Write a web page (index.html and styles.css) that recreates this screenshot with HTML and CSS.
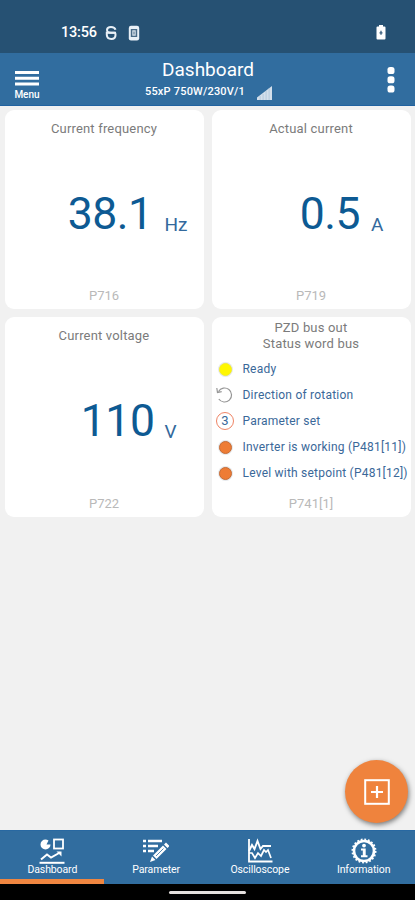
FILE: index.html
```html
<!DOCTYPE html>
<html lang="en">
<head>
<meta charset="utf-8">
<title>Dashboard</title>
<link rel="stylesheet" href="styles.css">
</head>
<body>
<div class="status">
  <span class="clock">13:56</span>
  <svg class="st-g" width="12" height="16" viewBox="0 0 12 16" fill="none" stroke="#e8f0f7" stroke-width="2"><path d="M10.500 4.800C9.500 1 2.300 1 2 4.800c0 2.600 1.300 2.900 4 2.900h5"/><path d="M1.800 7.700h7.700c1 0 1 1.300 1 2.300 0 5.300-8.300 5.300-8.700 0z"/></svg>
  <svg class="st-p" width="12" height="16" viewBox="0 0 12 16"><rect x=".8" y=".8" width="10.400" height="14.600" rx="2.200" fill="#e8f0f7"/><rect x="2.800" y="4" width="6.400" height="8" fill="#486b88"/><rect x="4.300" y="5.300" width="3.400" height="5.400" fill="#dce6ee"/><path d="M6 6.500v3" stroke="#486b88"/></svg>
  <svg class="battery" width="10" height="15" viewBox="0 0 10 15"><path d="M3 0h4v1.500h1.500Q9.500 1.500 9.500 2.500V13.500Q9.500 14.500 8.500 14.500h-7Q.5 14.500.5 13.500V2.500Q.5 1.500 1.500 1.500H3z" fill="#fff"/><path d="M5 5.800v4M3.500 7.800h3" stroke="#3a5f7e" stroke-width="1.300"/></svg>
</div>
<header class="header">
  <div class="menu"><svg width="24" height="15" viewBox="0 0 24 15" fill="#fff"><path d="M0 0h24v3H0zM0 5.700h24v3H0zM0 11.400h24v3H0z"/></svg><span>Menu</span></div>
  <div class="heading">
    <h1>Dashboard</h1>
    <div class="device"><span>55xP 750W/230V/1</span><svg width="15" height="14" viewBox="0 0 15 14"><path d="M0 14v-2.500L15 0v14z" fill="#d3dfeb"/><path d="M3.100 14v-4M6.100 14V8M9.100 14V5M12.100 14V2" stroke="#9fbad2" stroke-width=".6"/></svg></div>
  </div>
  <svg class="more" width="8" height="28" viewBox="0 0 8 28" fill="#fff"><rect x=".5" y="1" width="7" height="7" rx="2.600"/><rect x=".5" y="10.300" width="7" height="7" rx="2.600"/><rect x=".5" y="19.600" width="7" height="7" rx="2.600"/></svg>
</header>
<main class="main">
  <section class="card"><h2>Current frequency</h2><div class="reading hz"><b>38.1</b><span>Hz</span></div><footer>P716</footer></section>
  <section class="card"><h2>Actual current</h2><div class="reading amp"><b>0.5</b><span>A</span></div><footer>P719</footer></section>
  <section class="card"><h2>Current voltage</h2><div class="reading volt"><b>110</b><span>V</span></div><footer>P722</footer></section>
  <section class="card bus">
    <h2>PZD bus out<br>Status word bus</h2>
    <ul>
      <li><i class="dot ready"></i><span>Ready</span></li>
      <li><svg width="18" height="18" viewBox="0 0 18 18" fill="none" stroke="#969696" stroke-width="1.200"><path d="M2.500 5.500a7 7 0 1 1 .3 7.500M.8 2l.7 4.500 4.200-.8"/></svg><span>Direction of rotation</span></li>
      <li><i class="ring">3</i><span>Parameter set</span></li>
      <li><i class="dot"></i><span>Inverter is working (P481[11])</span></li>
      <li><i class="dot"></i><span>Level with setpoint (P481[12])</span></li>
    </ul>
    <footer>P741[1]</footer>
  </section>
</main>
<button class="fab" aria-label="Add"><svg width="26" height="26" viewBox="0 0 26 26" fill="none" stroke="#fff"><rect x="1.200" y="1.200" width="23.600" height="23.600" stroke-width="2"/><path d="M13 7v12M7 13h12" stroke-width="2.200"/></svg></button>
<nav class="nav">
  <a class="active"><svg width="26" height="26" viewBox="0 0 26 26" fill="none" stroke="#fff"><path d="M6.500 1.500a5 5 0 1 0 5 5H7.500L9.500 2.500Q8 1.500 6.500 1.500z" fill="#fff" stroke="none"/><rect x="15" y="1.500" width="9" height="9" stroke-width="1.800"/><path d="M2 21.500l6-5 4 3 9-5" stroke-width="2"/><path d="M17.500 13.500h5v5z" fill="#fff" stroke="none"/><path d="M.5 24.800h25" stroke-width="2"/></svg><span>Dashboard</span></a>
  <a><svg width="26" height="26" viewBox="0 0 26 26" fill="none" stroke="#fff"><path d="M0 3h3M0 8h3M0 13h3M5 3h14M5 8h10M5 13h6" stroke-width="2.600"/><path d="M10 17.500L20 7.500l3.500 3.500L13.500 21z" fill="#fff" stroke="none"/><path d="M21 6.500l2-2 3.500 3.500-2 2zM9 18.500l3.500 3.500-5.500 2z" fill="#fff" stroke="none"/><path d="M13 18l7.500-7.500" stroke="#316d9f" stroke-width=".8"/></svg><span>Parameter</span></a>
  <a><svg width="26" height="26" viewBox="0 0 26 26" fill="none" stroke="#fff"><path d="M2 1v22.500h23.500" stroke-width="1.800"/><path d="M2 13l3-6 2.500 4 3-8 3 8 2.500-3h8" stroke-width="1.900"/><path d="M2 15h3l3 5 3-5 3 3 3-6 2 2 2-2 3 8" stroke-width="1.700"/></svg><span>Oscilloscope</span></a>
  <a><svg width="26" height="26" viewBox="0 0 26 26" fill="none" stroke="#fff"><circle cx="13" cy="13" r="10" stroke-width="2.600"/><circle cx="13" cy="13" r="11.600" stroke-width="1.800" stroke-dasharray="1.822 1.822"/><circle cx="13" cy="7.600" r="1.900" fill="#fff" stroke="none"/><path d="M10 10.500h4.700v6.700h1.800v2H10v-2h1.800v-4.700H10z" fill="#fff" stroke="none"/></svg><span>Information</span></a>
</nav>
<div class="home"><i></i></div>
</body>
</html>
```

FILE: styles.css
```css
* { box-sizing: border-box; }
body { margin: 0; width: 415px; height: 900px; display: flex; flex-direction: column; background: #f1f1f1; font-family: Roboto, "Liberation Sans", sans-serif; overflow: hidden; }
h1, h2, ul { margin: 0; padding: 0; font-weight: 400; }
svg { display: block; flex: none; }

.status { height: 53px; flex: none; background: #265173; display: flex; align-items: center; padding: 12px 29px 0 61px; }
.clock { width: 44px; color: #fff; font-size: 14.5px; font-weight: 500; line-height: 16px; letter-spacing: -.2px; }
.st-p { margin-left: 11px; }
.battery { margin-left: auto; }

.header { height: 53px; flex: none; background: #316d9f; border-bottom: 1px solid #2062a0; color: #fff; display: grid; grid-template-columns: 54px 1fr 49px; }
.menu { display: flex; flex-direction: column; align-items: center; padding-top: 18px; font-size: 10px; line-height: 12px; gap: 3px; font-weight: 500; }
.heading { display: flex; flex-direction: column; align-items: center; padding: 5px 0 0; }
h1 { font-size: 19px; line-height: 24px; margin-right: 4px; }
.device { display: flex; gap: 12px; font-size: 11px; line-height: 14px; font-weight: 500; letter-spacing: .2px; margin: 3px 3px 0 0; }
.device svg { margin-top: 1px; }
.more { justify-self: center; margin-top: 13px; }

.main { flex: 1; display: grid; grid-template-columns: 199px 199px; grid-template-rows: 199px 200px; gap: 8px; padding: 4px 0 0 4.5px; align-content: start; }
.card { background: #fff; border-radius: 9px; display: flex; flex-direction: column; overflow: hidden; }
h2 { text-align: center; color: #7b7b7b; font-size: 13px; line-height: 15px; padding-top: 11px; letter-spacing: .18px; }
.reading { flex: 1; display: flex; align-items: baseline; justify-content: flex-end; color: #0d5a93; padding-top: 52px; }
.reading b { font-weight: 400; font-size: 44.5px; line-height: 53px; letter-spacing: -.5px; }
.reading span { font-size: 19px; color: #33699c; position: relative; top: 1.5px; }
.hz { padding-right: 16px; }
.hz span { margin-left: 12px; }
.amp { padding-right: 27px; }
.amp span { margin-left: 11px; }
.volt { padding-right: 27px; }
.volt span { margin-left: 10px; }
.card footer { color: #b9b9b9; text-align: center; font-size: 13px; line-height: 16px; padding-bottom: 5px; }

.bus h2 { padding-top: 3px; line-height: 15.5px; }
.bus ul { flex: 1; list-style: none; padding: 5px 0 0 4.5px; }
.bus li { height: 26px; display: grid; grid-template-columns: 18px auto; gap: 8.5px; align-items: center; color: #3a6899; font-size: 12px; letter-spacing: .22px; white-space: nowrap; }
.dot { width: 13px; height: 13px; border-radius: 50%; background: #ee7c35; border: 1px solid #c56c36; box-shadow: 0 0 0 1px #e6e9ec; justify-self: center; }
.ready { background: #fff700; border-color: #f3ed2c; }
.ring { width: 18px; height: 18px; border: 1px solid #ef8465; border-radius: 50%; text-align: center; font-style: normal; font-size: 13px; line-height: 16px; letter-spacing: 0; }

.fab { position: absolute; left: 345px; top: 760px; width: 63px; height: 63px; border: 0; border-radius: 50%; padding: 0; background: #ef833d; display: grid; place-items: center; box-shadow: 1px 2px 5px rgba(0,0,0,.5); }

.nav { height: 54px; flex: none; background: #316d9f; display: grid; grid-template-columns: repeat(4, 1fr); border-top: 1px solid #2868a1; }
.nav a { display: flex; flex-direction: column; align-items: center; color: #fff; font-size: 10.5px; letter-spacing: -.1px; line-height: 12px; padding: 7px 0 0 1px; border-bottom: 5px solid transparent; }
.nav .active { border-color: #ef8641; }
.home { height: 16px; flex: none; background: #000; display: flex; justify-content: center; padding-top: 7px; }
.home i { width: 77px; height: 3px; border-radius: 2px; background: #e4e0de; }
```
